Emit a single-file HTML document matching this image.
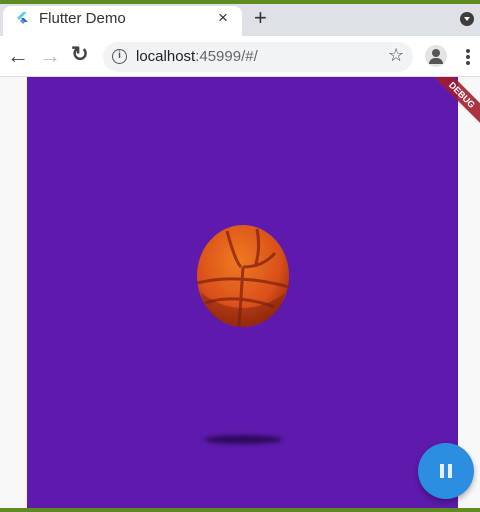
<!DOCTYPE html>
<html><head><meta charset="utf-8"><style>
*{margin:0;padding:0;box-sizing:border-box}
body{width:480px;height:512px;overflow:hidden;position:relative;background:#f8f8f8;font-family:"Liberation Sans",sans-serif}
.a{position:absolute}
</style></head><body>
<div class="a" style="left:0;top:0;width:480px;height:4px;background:#5f8b22"></div>
<div class="a" style="left:0;top:4px;width:480px;height:32px;background:#dee1e6"></div>
<div class="a" style="left:3px;top:6px;width:239px;height:30px;background:#fff;border-radius:8px 8px 0 0"></div>
<svg class="a" style="left:16px;top:11px" width="12" height="14" viewBox="0 0 12 14"><path d="M7 1L1 7l2 2 8-8z" fill="#5ec8f8"/><path d="M5 7l4 4h3L8 7z" fill="#1e88e5"/><path d="M4 10l3-3 3 3-3 3z" fill="#0d47a1" opacity=".6"/></svg>
<div class="a" style="left:39px;top:10px;font-size:15px;color:#333">Flutter Demo</div>
<div class="a" style="left:218px;top:8px;font-size:17px;color:#333">×</div>
<div class="a" style="left:254px;top:5px;font-size:22px;color:#333">+</div>
<div class="a" style="left:460px;top:12px;width:14px;height:14px;border-radius:50%;background:#3c3c3c"></div>
<div class="a" style="left:464px;top:17px;border-left:3px solid transparent;border-right:3px solid transparent;border-top:4px solid #fff"></div>
<div class="a" style="left:0;top:36px;width:480px;height:41px;background:#fff;border-bottom:1px solid #ddd"></div>
<div class="a" style="left:7px;top:43px;font-size:22px;color:#444;font-weight:bold">←</div>
<div class="a" style="left:39px;top:43px;font-size:22px;color:#bbb;font-weight:bold">→</div>
<div class="a" style="left:71px;top:42px;font-size:21px;color:#444;font-weight:bold">↻</div>
<div class="a" style="left:103px;top:42px;width:310px;height:30px;border-radius:15px;background:#f1f3f4"></div>
<div class="a" style="left:112px;top:49px;width:15px;height:15px;border:1.5px solid #555;border-radius:50%;font-size:10px;text-align:center;line-height:12px;color:#555;font-weight:bold">i</div>
<div class="a" style="left:136px;top:48px;font-size:15px;color:#222">localhost<span style="color:#666">:45999/#/</span></div>
<div class="a" style="left:388px;top:45px;font-size:18px;color:#444">☆</div>
<div class="a" style="left:425px;top:45px;width:22px;height:22px;border-radius:50%;background:#e4e4e4"></div>
<div class="a" style="left:432px;top:49px;width:8px;height:8px;border-radius:50%;background:#555"></div>
<div class="a" style="left:429px;top:58px;width:14px;height:6px;border-radius:7px 7px 0 0;background:#555"></div>
<div class="a" style="left:466px;top:49px;width:4px;height:4px;border-radius:50%;background:#444;box-shadow:0 6px 0 #444,0 12px 0 #444"></div>
<div class="a" style="left:27px;top:77px;width:431px;height:431px;background:#5e1aac;overflow:hidden">
 <div class="a" style="left:177px;top:358px;width:78px;height:9px;border-radius:50%;background:#2c0a5c;filter:blur(2px)"></div>
 <svg class="a" style="left:168px;top:146px" width="96" height="106" viewBox="0 0 96 106">
  <defs><radialGradient id="g" cx=".45" cy=".35" r=".65"><stop offset="0" stop-color="#f07a20"/><stop offset=".7" stop-color="#d9501a"/><stop offset="1" stop-color="#a8300f"/></radialGradient></defs>
  <ellipse cx="48" cy="53" rx="46" ry="51" fill="url(#g)"/>
  <path d="M32 8q8 30 14 36M62 6q4 20-2 38M80 30q-12 14-32 14M2 60q40-10 92 4M48 44l-4 60M10 80q30-10 70 4" stroke="#8a2410" stroke-width="3" fill="none" opacity=".8"/>
  <path d="M6 70q42 30 84 0q-6 30-42 34q-36-4-42-34z" fill="#7a200c" opacity=".45"/>
 </svg>
</div>
<div class="a" style="left:380px;top:77px;width:100px;height:100px;overflow:hidden">
 <div class="a" style="left:22px;top:11px;width:120px;height:14px;background:rgba(160,30,45,.9);transform:rotate(45deg);color:#fff;font-size:9px;font-weight:bold;text-align:center;line-height:14px">DEBUG</div>
</div>
<div class="a" style="left:418px;top:443px;width:56px;height:56px;border-radius:50%;background:#2c8ee0;box-shadow:0 3px 6px rgba(0,0,0,.3)"></div>
<div class="a" style="left:440px;top:464px;width:4px;height:14px;background:#e8f1fb"></div>
<div class="a" style="left:448px;top:464px;width:4px;height:14px;background:#e8f1fb"></div>
<div class="a" style="left:0;top:508px;width:480px;height:4px;background:#5f8b22"></div>
</body></html>
